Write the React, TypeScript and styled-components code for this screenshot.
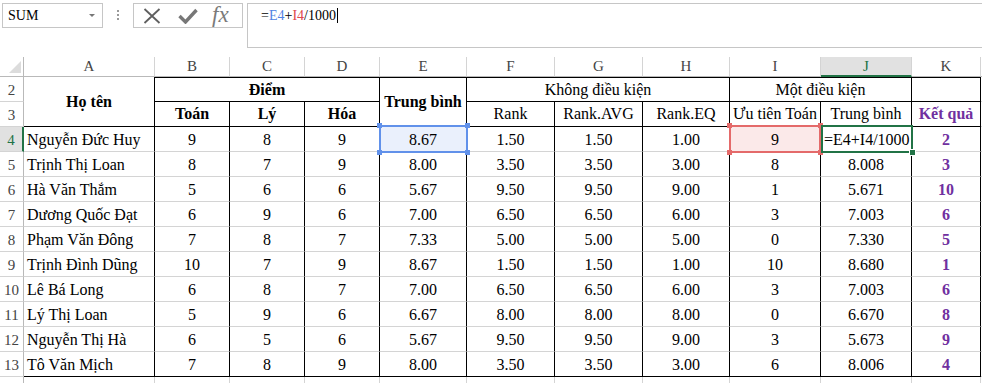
import React from 'react';
import styled, { createGlobalStyle } from 'styled-components';

const GRID = '#d4d4d4';
const INK = '#000';
const GREEN = '#217346';
const PURPLE = '#7030a0';
const HEAD_LINE = '#b9b9b9';

const TONES = {
  blue: { line: '#6191ea', fill: '#eaf0fc', text: '#4f82e3' },
  red: { line: '#e46a6a', fill: '#fbe9e9', text: '#e0474c' },
};

type Tone = keyof typeof TONES;

const COLS = [131, 75, 75, 75, 87, 88, 88, 87, 91, 91, 69];
const LETTERS = ['A', 'B', 'C', 'D', 'E', 'F', 'G', 'H', 'I', 'J', 'K'];

type Row = {
  n: number;
  name: string;
  vals: string[]; // B..J
  k: number;
};

const ROWS: Row[] = [
  { n: 4, name: 'Nguyễn Đức Huy', vals: ['9', '8', '9', '8.67', '1.50', '1.50', '1.00', '9', '=E4+I4/1000'], k: 2 },
  { n: 5, name: 'Trịnh Thị Loan', vals: ['8', '7', '9', '8.00', '3.50', '3.50', '3.00', '8', '8.008'], k: 3 },
  { n: 6, name: 'Hà Văn Thắm', vals: ['5', '6', '6', '5.67', '9.50', '9.50', '9.00', '1', '5.671'], k: 10 },
  { n: 7, name: 'Dương Quốc Đạt', vals: ['6', '9', '6', '7.00', '6.50', '6.50', '6.00', '3', '7.003'], k: 6 },
  { n: 8, name: 'Phạm Văn Đông', vals: ['7', '8', '7', '7.33', '5.00', '5.00', '5.00', '0', '7.330'], k: 5 },
  { n: 9, name: 'Trịnh Đình Dũng', vals: ['10', '7', '9', '8.67', '1.50', '1.50', '1.00', '10', '8.680'], k: 1 },
  { n: 10, name: 'Lê Bá Long', vals: ['6', '8', '7', '7.00', '6.50', '6.50', '6.00', '3', '7.003'], k: 6 },
  { n: 11, name: 'Lý Thị Loan', vals: ['5', '9', '6', '6.67', '8.00', '8.00', '8.00', '0', '6.670'], k: 8 },
  { n: 12, name: 'Nguyễn Thị Hà', vals: ['6', '5', '6', '5.67', '9.50', '9.50', '9.00', '3', '5.673'], k: 9 },
  { n: 13, name: 'Tô Văn Mịch', vals: ['7', '8', '9', '8.00', '3.50', '3.50', '3.00', '6', '8.006'], k: 4 },
];

const GlobalStyle = createGlobalStyle`
  html, body {
    margin: 0;
    padding: 0;
    overflow: hidden;
    background: #fff;
  }
  body {
    font-family: 'Liberation Serif', 'Times New Roman', serif;
    color: #000;
  }
`;

const Window = styled.div`
  width: 982px;
  height: 383px;
  overflow: hidden;
`;

/* ---------- formula bar ---------- */

const FormulaBar = styled.div`
  display: flex;
  align-items: flex-start;
  height: 57px;
  padding: 3px 0 0 2px;
  box-sizing: border-box;
`;

const NameBox = styled.div`
  width: 101px;
  height: 25px;
  box-sizing: border-box;
  border: 1px solid #c6c6c6;
  display: flex;
  align-items: center;
  justify-content: space-between;
  padding: 0 7px 0 5px;
  font-size: 14px;
`;

const DropArrow = styled.span`
  width: 0;
  height: 0;
  border-left: 3px solid transparent;
  border-right: 3px solid transparent;
  border-top: 3px solid #777;
`;

const Grip = styled.div`
  display: flex;
  flex-direction: column;
  gap: 2px;
  margin: 7px 14px 0 14px;
`;

const GripDot = styled.span`
  width: 2px;
  height: 2px;
  background: #9a9a9a;
`;

const FxBox = styled.div`
  width: 110px;
  height: 25px;
  box-sizing: border-box;
  border: 1px solid #c6c6c6;
  display: flex;
  align-items: center;
  padding-left: 9px;
  gap: 17px;
`;

const FxLabel = styled.span`
  font-style: italic;
  font-size: 23px;
  line-height: 21px;
  color: #7a7a7a;
  margin-left: -3px;
  margin-top: -3px;
`;

const FormulaInput = styled.div`
  flex: 1;
  height: 45px;
  margin-left: 4px;
  box-sizing: border-box;
  border: 1px solid #c6c6c6;
  border-right: none;
  padding: 3px 0 0 13px;
  font-size: 14px;
  line-height: 18px;
  display: flex;
  align-items: flex-start;
`;

const Ref = styled.span<{ $tone: Tone }>`
  color: ${(p) => TONES[p.$tone].text};
`;

const Caret = styled.span`
  display: inline-block;
  width: 1px;
  height: 15px;
  margin: 1px 0 0 1px;
  background: #000;
`;

/* ---------- sheet ---------- */

const Sheet = styled.div`
  display: grid;
  grid-template-columns: 24px ${COLS.map((w) => `${w}px`).join(' ')} 1fr;
  grid-template-rows: 20px repeat(13, 25px);
`;

const Corner = styled.div`
  position: relative;
  box-sizing: border-box;
  border-right: 1px solid ${HEAD_LINE};
  border-bottom: 1px solid ${HEAD_LINE};

  &::after {
    content: '';
    position: absolute;
    right: 2px;
    bottom: 3px;
    width: 0;
    height: 0;
    border-left: 12px solid transparent;
    border-bottom: 12px solid #dcdcdc;
  }
`;

const ColHead = styled.div<{ $active?: boolean }>`
  box-sizing: border-box;
  display: flex;
  align-items: center;
  justify-content: center;
  font-size: 15px;
  color: ${(p) => (p.$active ? GREEN : '#444')};
  background: ${(p) => (p.$active ? '#e1e1e1' : '#fff')};
  border-right: 1px solid ${GRID};
  border-bottom: ${(p) => (p.$active ? `2px solid ${GREEN}` : `1px solid ${HEAD_LINE}`)};
  padding-top: ${(p) => (p.$active ? '1px' : '0')};
`;

const RowHead = styled.div<{ $active?: boolean }>`
  box-sizing: border-box;
  display: flex;
  align-items: center;
  justify-content: center;
  padding-top: 3px;
  font-size: 15px;
  color: ${(p) => (p.$active ? GREEN : '#444')};
  background: ${(p) => (p.$active ? '#e1e1e1' : '#fff')};
  border-right: ${(p) => (p.$active ? `2px solid ${GREEN}` : `1px solid ${HEAD_LINE}`)};
  border-bottom: 1px solid ${GRID};
`;

type CellProps = {
  $r?: boolean;
  $b?: boolean;
  $top?: boolean;
  $left?: boolean;
  $bold?: boolean;
  $purple?: boolean;
  $head?: boolean;
  $fill?: Tone;
  $colSpan?: number;
  $rowSpan?: number;
};

const Cell = styled.div<CellProps>`
  position: relative;
  box-sizing: border-box;
  min-width: 0;
  display: flex;
  align-items: center;
  justify-content: ${(p) => (p.$left ? 'flex-start' : 'center')};
  padding: ${(p) => (p.$head ? '0 2px' : '2px 2px 0')};
  padding-left: ${(p) => (p.$left ? '3px' : '2px')};
  grid-column: ${(p) => (p.$colSpan ? `span ${p.$colSpan}` : 'auto')};
  grid-row: ${(p) => (p.$rowSpan ? `span ${p.$rowSpan}` : 'auto')};
  border-right: 1px solid ${(p) => (p.$r ? INK : GRID)};
  border-bottom: 1px solid ${(p) => (p.$b ? INK : GRID)};
  border-top: ${(p) => (p.$top ? `1px solid ${INK}` : 'none')};
  background: ${(p) => (p.$fill ? TONES[p.$fill].fill : 'transparent')};
  font-size: 16px;
  line-height: 18px;
  white-space: nowrap;
  font-weight: ${(p) => (p.$bold ? 700 : 400)};
  color: ${(p) => (p.$purple ? PURPLE : INK)};
`;

const RefFrame = styled.div<{ $tone: Tone }>`
  position: absolute;
  top: -2px;
  left: -1px;
  right: ${(p) => (p.$tone === 'red' ? '-1px' : '-2px')};
  bottom: -2px;
  border: 2px solid ${(p) => TONES[p.$tone].line};
  pointer-events: none;
  z-index: 2;
`;

const Handle = styled.span<{ $tone: Tone; $x: 'left' | 'right'; $y: 'top' | 'bottom' }>`
  position: absolute;
  width: 5px;
  height: 5px;
  background: ${(p) => TONES[p.$tone].line};
  ${(p) => p.$x}: -4px;
  ${(p) => p.$y}: -4px;
`;

const ActiveFrame = styled.div`
  position: absolute;
  top: -2px;
  left: 0;
  right: -2px;
  bottom: -2px;
  border: 2px solid ${GREEN};
  pointer-events: none;
  z-index: 3;
`;

const FillHandle = styled.span`
  position: absolute;
  right: -5px;
  bottom: -5px;
  width: 5px;
  height: 5px;
  background: ${GREEN};
  border: 1px solid #fff;
`;

const RefMark: React.FC<{ tone: Tone }> = ({ tone }) => (
  <RefFrame $tone={tone}>
    <Handle $tone={tone} $x="left" $y="top" />
    <Handle $tone={tone} $x="right" $y="top" />
    <Handle $tone={tone} $x="left" $y="bottom" />
    <Handle $tone={tone} $x="right" $y="bottom" />
  </RefFrame>
);

const CancelIcon = () => (
  <svg width="18" height="16" viewBox="0 0 18 16">
    <path d="M1.5 1 L16.5 15 M16.5 1 L1.5 15" stroke="#5f5f5f" strokeWidth="1.8" fill="none" />
  </svg>
);

const EnterIcon = () => (
  <svg width="20" height="16" viewBox="0 0 20 16">
    <path d="M1.5 8 L7.5 14 L18.5 2" stroke="#777" strokeWidth="3.4" fill="none" />
  </svg>
);

const DataRow: React.FC<{ row: Row; last: boolean }> = ({ row, last }) => {
  const active = row.n === 4;
  return (
    <>
      <RowHead $active={active}>{row.n}</RowHead>
      <Cell $r $b={last} $left>
        {row.name}
      </Cell>
      {row.vals.map((v, j) => {
        // j: 0=B ... 3=E ... 7=I, 8=J
        if (active && j === 3) {
          return (
            <Cell key={j} $r $b={last} $fill="blue">
              {v}
              <RefMark tone="blue" />
            </Cell>
          );
        }
        if (active && j === 7) {
          return (
            <Cell key={j} $r $b={last} $fill="red">
              {v}
              <RefMark tone="red" />
            </Cell>
          );
        }
        if (active && j === 8) {
          return (
            <Cell key={j} $r $b={last} $left>
              {v}
              <ActiveFrame>
                <FillHandle />
              </ActiveFrame>
            </Cell>
          );
        }
        return (
          <Cell key={j} $r $b={last}>
            {v}
          </Cell>
        );
      })}
      <Cell $r $b={last} $bold $purple>
        {row.k}
      </Cell>
      <Cell />
    </>
  );
};

export default function App() {
  return (
    <Window>
      <GlobalStyle />
      <FormulaBar>
        <NameBox>
          SUM
          <DropArrow />
        </NameBox>
        <Grip>
          <GripDot />
          <GripDot />
          <GripDot />
        </Grip>
        <FxBox>
          <CancelIcon />
          <EnterIcon />
          <FxLabel>fx</FxLabel>
        </FxBox>
        <FormulaInput>
          =<Ref $tone="blue">E4</Ref>+<Ref $tone="red">I4</Ref>/1000
          <Caret />
        </FormulaInput>
      </FormulaBar>

      <Sheet>
        <Corner />
        {LETTERS.map((l) => (
          <ColHead key={l} $active={l === 'J'}>
            {l}
          </ColHead>
        ))}
        <ColHead />

        {/* row 2 */}
        <RowHead>2</RowHead>
        <Cell $r $b $head $bold $rowSpan={2}>
          Họ tên
        </Cell>
        <Cell $r $b $top $head $bold $colSpan={3}>
          Điểm
        </Cell>
        <Cell $r $b $top $head $bold $rowSpan={2}>
          Trung bình
        </Cell>
        <Cell $r $b $top $head $colSpan={3}>
          Không điều kiện
        </Cell>
        <Cell $r $b $top $head $colSpan={2}>
          Một điều kiện
        </Cell>
        <Cell $r $b $top $head />
        <Cell />

        {/* row 3 */}
        <RowHead>3</RowHead>
        <Cell $r $b $head $bold>
          Toán
        </Cell>
        <Cell $r $b $head $bold>
          Lý
        </Cell>
        <Cell $r $b $head $bold>
          Hóa
        </Cell>
        <Cell $r $b $head>
          Rank
        </Cell>
        <Cell $r $b $head>
          Rank.AVG
        </Cell>
        <Cell $r $b $head>
          Rank.EQ
        </Cell>
        <Cell $r $b $head>
          Ưu tiên Toán
        </Cell>
        <Cell $r $b $head>
          Trung bình
        </Cell>
        <Cell $r $b $head $bold $purple>
          Kết quả
        </Cell>
        <Cell />

        {ROWS.map((row, i) => (
          <DataRow key={row.n} row={row} last={i === ROWS.length - 1} />
        ))}

        {/* row 14, only its top edge shows in the window */}
        <RowHead />
        {LETTERS.map((l) => (
          <Cell key={l} />
        ))}
        <Cell />
      </Sheet>
    </Window>
  );
}
